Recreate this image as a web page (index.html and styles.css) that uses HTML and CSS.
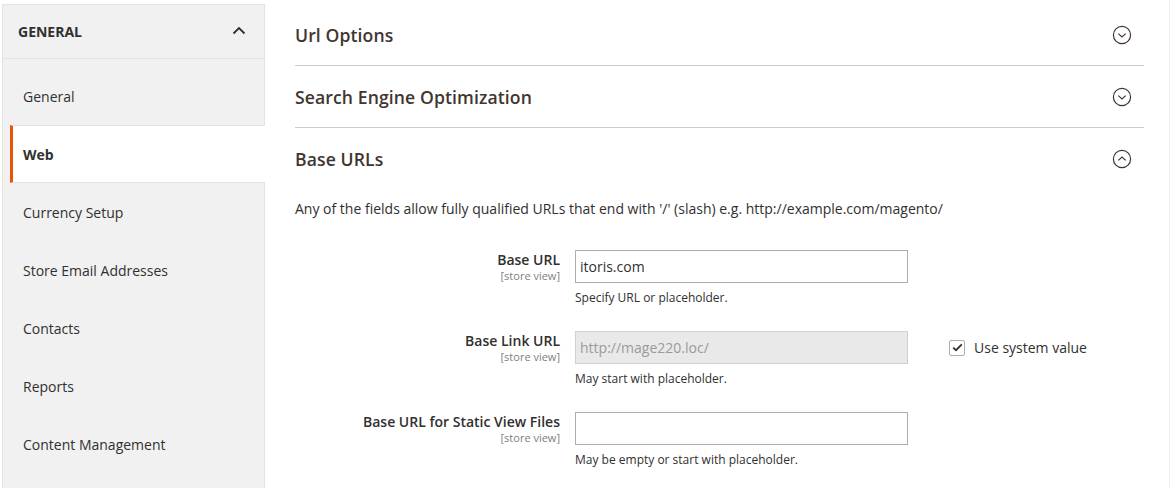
FILE: index.html
```html
<!DOCTYPE html>
<html lang="en">
<head>
    <meta charset="UTF-8">
    <title>Configuration - Web</title>
    <link rel="stylesheet" href="styles.css">
</head>
<body>
    <div class="page">
        <!-- left config tabs -->
        <aside class="sidebar">
            <div class="sidebar-title">
                <span>General</span>
                <svg class="caret" width="14" height="9" viewBox="0 0 14 9">
                    <path d="M1.5 7.5 L7 2 L12.5 7.5" fill="none" stroke="#303030" stroke-width="1.8"/>
                </svg>
            </div>
            <ul class="nav">
                <li class="nav-item">General</li>
                <li class="nav-item active">Web</li>
                <li class="nav-item">Currency Setup</li>
                <li class="nav-item">Store Email Addresses</li>
                <li class="nav-item">Contacts</li>
                <li class="nav-item">Reports</li>
                <li class="nav-item">Content Management</li>
            </ul>
        </aside>

        <main class="content">
            <div class="section-head">
                <h2>Url Options</h2>
                <svg class="toggle" width="20" height="20" viewBox="0 0 20 20">
                    <circle cx="10" cy="10" r="8.6" fill="none" stroke="#41362f" stroke-width="1.2"/>
                    <path d="M6.3 8.6 L10 12 L13.7 8.6" fill="none" stroke="#41362f" stroke-width="1.2"/>
                </svg>
            </div>
            <div class="section-head">
                <h2>Search Engine Optimization</h2>
                <svg class="toggle" width="20" height="20" viewBox="0 0 20 20">
                    <circle cx="10" cy="10" r="8.6" fill="none" stroke="#41362f" stroke-width="1.2"/>
                    <path d="M6.3 8.6 L10 12 L13.7 8.6" fill="none" stroke="#41362f" stroke-width="1.2"/>
                </svg>
            </div>
            <div class="section-head open">
                <h2>Base URLs</h2>
                <svg class="toggle" width="20" height="20" viewBox="0 0 20 20">
                    <circle cx="10" cy="10" r="8.6" fill="none" stroke="#41362f" stroke-width="1.2"/>
                    <path d="M6.3 11.4 L10 8 L13.7 11.4" fill="none" stroke="#41362f" stroke-width="1.2"/>
                </svg>
            </div>

            <p class="section-note">Any of the fields allow fully qualified URLs that end with '/' (slash) e.g. http://example.com/magento/</p>

            <div class="field">
                <label class="field-label">
                    <span>Base URL</span>
                    <small>[store view]</small>
                </label>
                <div class="control">
                    <input type="text" class="input" value="itoris.com">
                    <div class="note">Specify URL or placeholder.</div>
                </div>
            </div>

            <div class="field">
                <label class="field-label">
                    <span>Base Link URL</span>
                    <small>[store view]</small>
                </label>
                <div class="control">
                    <input type="text" class="input" value="http://mage220.loc/" disabled>
                    <div class="note">May start with placeholder.</div>
                </div>
                <div class="use-default">
                    <span class="checkbox">
                        <svg width="11" height="9" viewBox="0 0 11 9">
                            <path d="M1.2 4.6 L4 7.2 L9.8 1.4" fill="none" stroke="#303030" stroke-width="1.8"/>
                        </svg>
                    </span>
                    <span>Use system value</span>
                </div>
            </div>

            <div class="field">
                <label class="field-label">
                    <span>Base URL for Static View Files</span>
                    <small>[store view]</small>
                </label>
                <div class="control">
                    <input type="text" class="input" value="">
                    <div class="note">May be empty or start with placeholder.</div>
                </div>
            </div>
        </main>
    </div>
</body>
</html>
```

FILE: styles.css
```css
* {
    margin: 0;
    padding: 0;
    box-sizing: border-box;
}

body {
    background: #fff;
    font-family: 'Open Sans', 'Liberation Sans', sans-serif;
    color: #303030;
    overflow: hidden;
}

.page {
    display: flex;
    align-items: flex-start;
    width: 1170px;
    height: 488px;
    padding-top: 4px;
    border-right: 1px solid #efefef;
}

/* sidebar */

.sidebar {
    width: 263px;
    height: 484px;
    margin-left: 2px;
    background: #f1f1f1;
    border: 1px solid #e3e3e3;
    border-bottom: none;
}

.sidebar-title {
    display: flex;
    align-items: center;
    justify-content: space-between;
    height: 54px;
    padding: 0 18px 0 15px;
    border-bottom: 1px solid #e3e3e3;
    font-size: 14px;
    font-weight: 700;
    text-transform: uppercase;
    color: #303030;
}

.caret {
    margin-top: -2px;
}

.nav {
    list-style: none;
    padding-top: 8px;
}

.nav-item {
    display: flex;
    align-items: center;
    height: 58px;
    margin-left: 7px;
    margin-right: -1px;
    padding-left: 10px;
    border-left: 3px solid transparent;
    font-size: 14px;
    color: #303030;
}

.nav-item.active {
    height: 58px;
    background: #fff;
    border-left-color: #eb5202;
    border-top: 1px solid #e3e3e3;
    border-bottom: 1px solid #e3e3e3;
    font-weight: 700;
}

/* main area */

.content {
    width: 849px;
    margin-left: 30px;
}

.section-head {
    display: flex;
    align-items: center;
    justify-content: space-between;
    height: 62px;
    padding-right: 12px;
    border-bottom: 1px solid #cccccc;
}

.section-head.open {
    border-bottom: none;
}

.section-head h2 {
    font-size: 17.6px;
    font-weight: 600;
    color: #41362f;
    letter-spacing: 0.1px;
}

.section-note {
    margin-top: 9px;
    font-size: 14px;
    line-height: 20px;
    color: #303030;
}

.field {
    display: flex;
    align-items: flex-start;
    margin-top: 31px;
}

.field + .field {
    margin-top: 25px;
}

.field-label {
    display: flex;
    flex-direction: column;
    align-items: flex-end;
    width: 280px;
    padding-right: 15px;
    padding-top: 1px;
    text-align: right;
}

.field-label span {
    font-size: 14px;
    font-weight: 600;
    line-height: 18px;
    color: #303030;
}

.field-label small {
    font-size: 11px;
    line-height: 14px;
    color: #808080;
}

.control {
    width: 333px;
}

.input {
    display: block;
    width: 100%;
    height: 33px;
    padding: 0 4px;
    border: 1px solid #adadad;
    font-family: inherit;
    font-size: 14px;
    color: #303030;
    background: #fff;
    outline: none;
}

.input:disabled {
    background: #e9e9e9;
    border-color: #d0d0d0;
    color: #9a9a9a;
}

.note {
    margin-top: 7px;
    font-size: 12px;
    line-height: 16px;
    color: #303030;
}

.use-default {
    display: flex;
    align-items: center;
    height: 33px;
    margin-left: 41px;
    font-size: 14px;
    color: #303030;
}

.checkbox {
    display: flex;
    align-items: center;
    justify-content: center;
    width: 16px;
    height: 16px;
    margin-right: 9px;
    border: 1px solid #adadad;
    border-radius: 2px;
    background: #fff;
}
```
